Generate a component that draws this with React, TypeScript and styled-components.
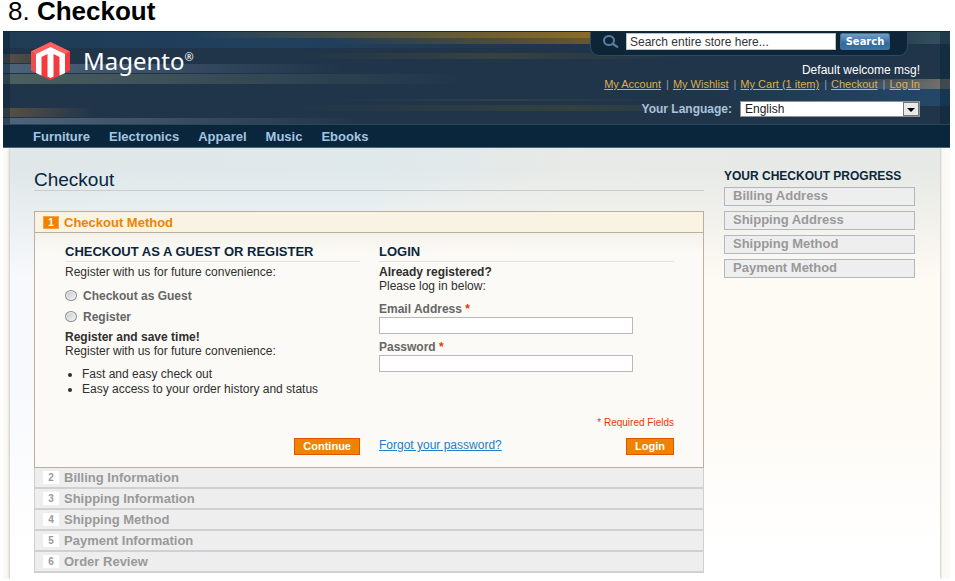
import React from 'react';
import styled, { createGlobalStyle, css } from 'styled-components';

const GlobalStyle = createGlobalStyle`
  * { box-sizing: border-box; }
  body { margin: 0; background: #fff; color: #2f2f2f; font: 12px/14px "Liberation Sans", Arial, sans-serif; }
  h1, h2, h3, p, ul, ol { margin: 0; padding: 0; }
  input, button, select { font-family: inherit; margin: 0; }
  ol, ul { list-style: none; }
`;

const Caption = styled.h1`
  padding: 0 8px 8px;
  font-size: 26px;
  line-height: 23px;
  font-weight: 400;
  color: #000;
`;

const Store = styled.div`
  margin: 0 5px 0 3px;
  background: linear-gradient(90deg, #fcfbf8 0, #f8f6f1 7px, #fcfaf7 12px);
`;

const streak = (from: string, to: string, dir = '90deg') => `linear-gradient(${dir}, ${from}, ${to})`;

const Header = styled.header`
  display: flex;
  justify-content: space-between;
  height: 94px;
  padding: 0 30px 0 28px;
  border-top: 1px solid #0f2b42;
  border-bottom: 1px solid #2b465b;
  background-color: #20354a;
  background-repeat: no-repeat;
  background-image:
    linear-gradient(rgba(10, 36, 55, 0.5), rgba(10, 36, 55, 0.5)),
    linear-gradient(rgba(10, 36, 55, 0.5), rgba(10, 36, 55, 0.5)),
    ${streak('rgba(140,108,36,0)', '#8a6c27')},
    ${streak('rgba(105,88,45,0)', '#67582f')},
    linear-gradient(90deg, rgba(56,66,67,0), #37423f 50%, rgba(56,66,67,0)),
    ${streak('#5a5144', 'rgba(80,72,60,0)')},
    ${streak('#4d637a', 'rgba(60,82,105,0)')},
    ${streak('#4c6060', 'rgba(58,78,78,0)')},
    ${streak('rgba(112,108,98,0)', '#77736a')},
    linear-gradient(90deg, rgba(56,66,67,0), #303f47 50%, rgba(56,66,67,0)),
    linear-gradient(90deg, rgba(56,66,67,0), #34413f 60%, rgba(56,66,67,0)),
    ${streak('#5a5143', 'rgba(80,72,60,0)')},
    ${streak('#50647b', 'rgba(60,82,105,0)')},
    ${streak('rgba(60,88,102,0.1)', '#35525f')},
    linear-gradient(90deg, #203c55, #20405f 30%, rgba(32,56,82,0) 60%),
    linear-gradient(90deg, rgba(35,70,102,0), #24486a);
  background-size:
    7px 100%, 10px 100%, 400px 6px, 260px 6px, 400px 6px, 70px 9px, 340px 9px,
    460px 10px, 110px 10px, 360px 2px, 480px 6px, 90px 9px, 360px 7px, 80px 12px,
    100% 16px, 240px 24px;
  background-position:
    0 0, right 0, 188px 0, 328px 6px, 290px 21px, 0 22px, 0 32px,
    0 42px, right 47px, 320px 67px, 280px 73px, 0 76px, 0 86px, right 0,
    0 0, right 50px;
`;

const Brand = styled.a`
  display: flex;
  align-self: flex-start;
  gap: 13px;
  padding-top: 10px;
  color: #fff;
  text-decoration: none;
  font: 24px/38px "Noto Sans", sans-serif;
`;

const Mark = styled.sup`
  font-size: 11px;
  line-height: 11px;
  vertical-align: 9px;
`;

const Account = styled.div`
  display: flex;
  flex-direction: column;
  align-items: flex-end;
`;

const SearchForm = styled.form`
  display: flex;
  align-items: center;
  height: 24px;
  margin-right: 12px;
  padding: 0 17px 4px 12px;
  border: solid #2a4a65;
  border-width: 0 1px 1px;
  border-radius: 0 0 9px 9px;
  background: #0d2537;
`;

const SearchInput = styled.input`
  width: 210px;
  height: 17px;
  margin: 0 4px 0 7px;
  padding: 0 3px;
  border: 1px solid #b7c3cc;
  border-radius: 0;
  background: #fff;
  color: #333;
  font-size: 12px;
`;

const SearchButton = styled.button`
  width: 50px;
  height: 17px;
  padding: 0;
  border: 1px solid #3b719c;
  border-radius: 2px;
  background: linear-gradient(#719fc5, #32699a 65%, #3b75a5);
  color: #fff;
  && { font: bold 10px/14px "DejaVu Sans", sans-serif; }
`;

const Welcome = styled.p`
  margin-top: 7px;
  color: #fff;
`;

const Links = styled.ul`
  display: flex;
  font-size: 11px;
  li + li::before { content: '|'; margin: 0 4px 0 5px; color: #8fa3a8; }
  a { color: #ddaf4c; }
`;

const Language = styled.label`
  display: flex;
  align-items: center;
  gap: 8px;
  margin-top: 10px;
  color: #a6c3df;
  font-weight: 700;
`;

const SelectBox = styled.span`
  position: relative;
  display: flex;
  width: 180px;
  height: 16px;
`;

const Select = styled.select`
  width: 100%;
  padding: 0 18px 0 4px;
  border: 1px solid #8d9299;
  border-radius: 0;
  appearance: none;
  background: #fff;
  color: #222;
  font-size: 12px;
`;

const ArrowFrame = styled.svg`
  position: absolute;
  right: 1px;
  top: 1px;
  pointer-events: none;
`;

const Nav = styled.nav`
  display: flex;
  gap: 19px;
  height: 23px;
  padding: 0 30px;
  border-bottom: 1px solid #4a6577;
  background: #09263d;
  a { color: #a4c5e0; font-size: 13px; line-height: 23px; font-weight: 700; text-decoration: none; }
`;

const Page = styled.div`
  display: grid;
  grid-template-columns: minmax(0, 1fr) 191px;
  gap: 20px;
  margin: 0 10px 0 7px;
  padding: 21px 25px 6px 24px;
  box-shadow: 0 0 3px #aaa6a0;
  clip-path: inset(0 -3px 0 -3px);
  background:
    linear-gradient(rgba(255, 255, 255, 0) 240px, #fff 400px),
    linear-gradient(rgba(255, 255, 255, 0) 20px, #f8f9fc 130px) 0 0 / 40% 100% no-repeat,
    linear-gradient(rgba(254, 250, 243, 0) 20px, #fefaf4 130px) right / 60% 100% no-repeat,
    linear-gradient(90deg, #dfe7e9, #dfe8eb 40%, #e7eae7 60%, #e6e9e5);
`;

const Title = styled.h2`
  margin-bottom: 20px;
  border-bottom: 1px solid #cbcccc;
  color: #0a263c;
  font-size: 19px;
  line-height: 21px;
  font-weight: 400;
`;

const StepHead = styled.h3<{ $active?: boolean }>`
  display: flex;
  align-items: center;
  gap: 5px;
  height: 21px;
  padding-left: 8px;
  border: solid #d0d0d2;
  border-width: 0 1px 2px;
  background: #eee;
  color: #999;
  font-size: 13px;
  line-height: 19px;
  ${p => p.$active && css`
    height: 22px;
    border-color: #bbafa0;
    border-width: 1px;
    background: #f9f3e3;
    color: #f18200;
  `}
`;

const Badge = styled.span<{ $active?: boolean }>`
  width: 16px;
  height: 13px;
  border: 1px solid ${p => (p.$active ? '#f4a445' : '#fff')};
  background: ${p => (p.$active ? '#f18200' : '#fff')};
  color: ${p => (p.$active ? '#fff' : '#999')};
  font-size: 10px;
  line-height: 11px;
  text-align: center;
`;

const StepBody = styled.div`
  display: grid;
  grid-template-columns: 1fr 1fr;
  gap: 19px;
  padding: 10px 29px 12px 30px;
  border: solid #bbafa0;
  border-width: 0 1px 1px;
  background: linear-gradient(#f5f2ec, #fbfaf6 20px);
`;

const Column = styled.section`
  display: flex;
  flex-direction: column;
`;

const ColumnTitle = styled.h3`
  margin-bottom: 3px;
  border-bottom: 1px solid #e3e2df;
  color: #0a263c;
  font-size: 13px;
  line-height: 18px;
  white-space: nowrap;
`;

const Choices = styled.div`
  display: grid;
  grid-auto-rows: 21px;
  margin: 6px 0 3px;
`;

const Choice = styled.label`
  display: flex;
  align-items: center;
  gap: 6px;
  color: #666;
  font-weight: 700;
`;

const Radio = styled.input`
  width: 12px;
  height: 11px;
  appearance: none;
  border: 1px solid #8b9094;
  border-radius: 50%;
  background: linear-gradient(135deg, #c3c7ca, #f5f5f5);
  box-shadow: inset 0 0 0 1px #eee;
  &:checked { background: radial-gradient(#24506f 35%, #eee 45%); }
`;

const Benefits = styled.ul`
  margin-top: 9px;
  padding-left: 17px;
  list-style: disc;
  line-height: 15px;
`;

const Fields = styled.div`
  padding-top: 3px;
`;

const Field = styled.label`
  display: block;
  margin-top: 6px;
  color: #666;
  font-weight: 700;
`;

const TextInput = styled.input`
  display: block;
  width: 86%;
  height: 17px;
  margin-top: 1px;
  padding: 0 3px;
  border: 1px solid #b9b9bb;
  border-radius: 0;
  background: #fff;
`;

const Star = styled.em`
  color: #eb340a;
  font-style: normal;
`;

const Required = styled.p`
  margin: 44px 0 9px;
  color: #eb340a;
  font-size: 10px;
  line-height: 13px;
  text-align: right;
`;

const Actions = styled.div<{ $end?: boolean }>`
  display: flex;
  justify-content: ${p => (p.$end ? 'flex-end' : 'space-between')};
  margin-top: auto;
  a { color: #1e7ec8; }
`;

const Button = styled.button`
  height: 17px;
  padding: 0 8px;
  border: 1px solid #de5400;
  border-radius: 0;
  background: #f18200;
  color: #fff;
  font-size: 11px;
  line-height: 15px;
  font-weight: 700;
`;

const SideTitle = styled.h3`
  margin-bottom: 3px;
  color: #0a263c;
  font-size: 12px;
  line-height: 15px;
  white-space: nowrap;
`;

const Progress = styled.ol`
  display: grid;
  gap: 5px;
  li {
    height: 19px;
    padding-left: 8px;
    border: 1px solid #b1b8bd;
    background: #eee;
    color: #999;
    font-size: 13px;
    line-height: 16px;
    font-weight: 700;
  }
`;

const LogoIcon = () => (
  <svg width="39" height="38" viewBox="0 0 39 38" aria-hidden="true">
    <path d="M19.500 0 39 9.500v19L19.500 38 0 28.500v-19Z" fill="#f5393f" />
    <path d="M19.500 0 39 9.500l-5 2.500-14.500-7L5 12 0 9.500Z" fill="#f9605e" />
    <path d="M0 9.500 5 12v19l-5-2.500Z" fill="#f04c4d" />
    <path d="M19.500 5 34 12v19l-5.500 2.500V15l-6-3v22.500l-3 1.500-3-1.500V12l-6 3v18.500L5 31V12Z" fill="#fff" />
  </svg>
);

const SearchIcon = () => (
  <svg width="16" height="13" viewBox="0 0 16 13" fill="none" stroke="#587f9f" aria-hidden="true">
    <ellipse cx="6" cy="5.5" rx="5" ry="4.5" strokeWidth="2" />
    <path d="m10 9 5 3.3" strokeWidth="2.2" />
  </svg>
);

const navItems = ['Furniture', 'Electronics', 'Apparel', 'Music', 'Ebooks'];
const accountLinks = ['My Account', 'My Wishlist', 'My Cart (1 item)', 'Checkout', 'Log In'];
const laterSteps = ['Billing Information', 'Shipping Information', 'Shipping Method', 'Payment Information', 'Order Review'];
const progress = ['Billing Address', 'Shipping Address', 'Shipping Method', 'Payment Method'];

export default function App() {
  return (
    <>
      <GlobalStyle />
      <Caption>8. <strong>Checkout</strong></Caption>
      <Store>
        <Header>
          <Brand href="#">
            <LogoIcon />
            <span>Magento<Mark>®</Mark></span>
          </Brand>
          <Account>
            <SearchForm onSubmit={e => e.preventDefault()}>
              <SearchIcon />
              <SearchInput type="text" aria-label="Search" defaultValue="Search entire store here..." />
              <SearchButton type="submit">Search</SearchButton>
            </SearchForm>
            <Welcome>Default welcome msg!</Welcome>
            <Links>
              {accountLinks.map(name => <li key={name}><a href="#">{name}</a></li>)}
            </Links>
            <Language>
              Your Language:
              <SelectBox>
                <Select defaultValue="English"><option>English</option></Select>
                <ArrowFrame width="16" height="14" viewBox="0 0 16 14" aria-hidden="true">
                  <rect x="0.5" y="0.5" width="15" height="13" fill="#e9e9e9" stroke="#777" />
                  <path d="M4 6h8L8 10Z" fill="#000" />
                </ArrowFrame>
              </SelectBox>
            </Language>
          </Account>
        </Header>
        <Nav>
          {navItems.map(name => <a key={name} href="#">{name}</a>)}
        </Nav>
        <Page>
          <main>
            <Title>Checkout</Title>
            <StepHead $active><Badge $active>1</Badge>Checkout Method</StepHead>
            <StepBody>
              <Column>
                <ColumnTitle>CHECKOUT AS A GUEST OR REGISTER</ColumnTitle>
                <p>Register with us for future convenience:</p>
                <Choices>
                  <Choice><Radio type="radio" name="method" />Checkout as Guest</Choice>
                  <Choice><Radio type="radio" name="method" />Register</Choice>
                </Choices>
                <p><strong>Register and save time!</strong></p>
                <p>Register with us for future convenience:</p>
                <Benefits>
                  <li>Fast and easy check out</li>
                  <li>Easy access to your order history and status</li>
                </Benefits>
                <Actions $end><Button type="button">Continue</Button></Actions>
              </Column>
              <Column>
                <ColumnTitle>LOGIN</ColumnTitle>
                <p><strong>Already registered?</strong></p>
                <p>Please log in below:</p>
                <Fields>
                  <Field>Email Address <Star>*</Star><TextInput type="email" /></Field>
                  <Field>Password <Star>*</Star><TextInput type="password" /></Field>
                </Fields>
                <Required>* Required Fields</Required>
                <Actions>
                  <a href="#">Forgot your password?</a>
                  <Button type="button">Login</Button>
                </Actions>
              </Column>
            </StepBody>
            {laterSteps.map((name, i) => (
              <StepHead key={name}><Badge>{i + 2}</Badge>{name}</StepHead>
            ))}
          </main>
          <aside>
            <SideTitle>YOUR CHECKOUT PROGRESS</SideTitle>
            <Progress>
              {progress.map(name => <li key={name}>{name}</li>)}
            </Progress>
          </aside>
        </Page>
      </Store>
    </>
  );
}
